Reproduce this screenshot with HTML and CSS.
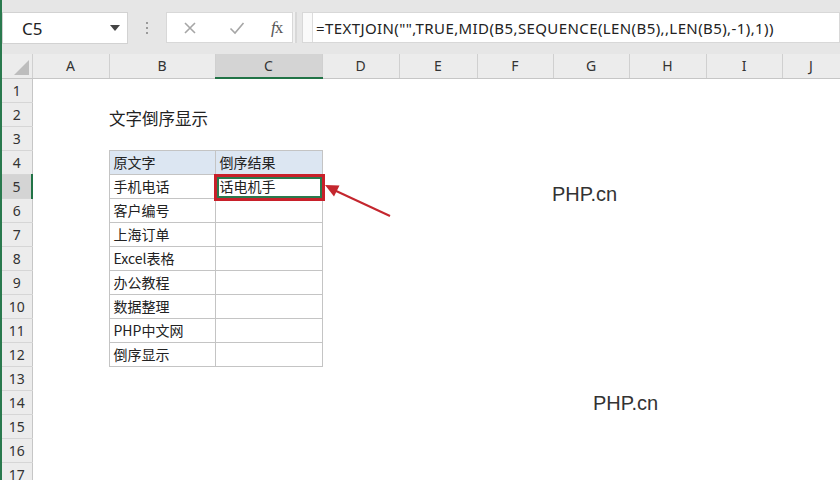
FILE: index.html
```html
<!DOCTYPE html>
<html lang="zh-CN">
<head>
<meta charset="utf-8">
<title>文字倒序显示</title>
<link rel="stylesheet" href="styles.css">
</head>
<body>
<div class="app">
  <div class="toolbar">
    <div class="namebox"><span class="ref">C5</span><span class="caret"></span></div>
    <div class="dots"><i></i><i></i><i></i></div>
    <div class="fbtns">
      <svg class="ico" width="14" height="14" viewBox="0 0 14 14"><path d="M2 2 L12 12 M12 2 L2 12" stroke="#a6a6a6" stroke-width="1.6" fill="none"/></svg>
      <svg class="ico" width="16" height="14" viewBox="0 0 16 14"><path d="M1.5 7.5 L6 12 L14.5 2" stroke="#a6a6a6" stroke-width="1.6" fill="none"/></svg>
      <span class="fx"><i>f</i>x</span>
      <span class="sep"></span>
    </div>
    <div class="fbox"><span class="fgap"></span><span class="ftext">=TEXTJOIN("",TRUE,MID(B5,SEQUENCE(LEN(B5),,LEN(B5),-1),1))</span></div>
  </div>
  <table class="sheet">
    <colgroup>
      <col class="w-rh"><col class="w-a"><col class="w-b"><col class="w-c"><col class="w-d"><col class="w-e"><col class="w-f"><col class="w-g"><col class="w-h"><col class="w-i"><col class="w-j">
    </colgroup>
    <thead>
      <tr><th class="corner"><span class="tri"></span></th><th>A</th><th>B</th><th class="on">C</th><th>D</th><th>E</th><th>F</th><th>G</th><th>H</th><th>I</th><th>J</th></tr>
    </thead>
    <tbody>
      <tr><th>1</th><td></td><td></td><td></td><td></td><td></td><td></td><td></td><td></td><td></td><td></td></tr>
      <tr><th>2</th><td></td><td class="title">文字倒序显示</td><td></td><td></td><td></td><td></td><td></td><td></td><td></td><td></td></tr>
      <tr><th>3</th><td></td><td></td><td></td><td></td><td></td><td></td><td></td><td></td><td></td><td></td></tr>
      <tr><th>4</th><td></td><td class="bx hd">原文字</td><td class="bx hd">倒序结果</td><td></td><td></td><td></td><td></td><td></td><td></td><td></td></tr>
      <tr><th class="on">5</th><td></td><td class="bx">手机电话</td><td class="bx sel">话电机手<span class="selbox"></span></td><td></td><td></td><td></td><td></td><td></td><td></td><td></td></tr>
      <tr><th>6</th><td></td><td class="bx">客户编号</td><td class="bx"></td><td></td><td></td><td></td><td></td><td></td><td></td><td></td></tr>
      <tr><th>7</th><td></td><td class="bx">上海订单</td><td class="bx"></td><td></td><td></td><td></td><td></td><td></td><td></td><td></td></tr>
      <tr><th>8</th><td></td><td class="bx">Excel表格</td><td class="bx"></td><td></td><td></td><td></td><td></td><td></td><td></td><td></td></tr>
      <tr><th>9</th><td></td><td class="bx">办公教程</td><td class="bx"></td><td></td><td></td><td></td><td></td><td></td><td></td><td></td></tr>
      <tr><th>10</th><td></td><td class="bx">数据整理</td><td class="bx"></td><td></td><td></td><td></td><td></td><td></td><td></td><td></td></tr>
      <tr><th>11</th><td></td><td class="bx">PHP中文网</td><td class="bx"></td><td></td><td></td><td></td><td></td><td></td><td></td><td></td></tr>
      <tr><th>12</th><td></td><td class="bx">倒序显示</td><td class="bx"></td><td></td><td></td><td></td><td></td><td></td><td></td><td></td></tr>
      <tr><th>13</th><td></td><td></td><td></td><td></td><td></td><td></td><td></td><td></td><td></td><td></td></tr>
      <tr><th>14</th><td></td><td></td><td></td><td></td><td></td><td></td><td></td><td></td><td></td><td></td></tr>
      <tr><th>15</th><td></td><td></td><td></td><td></td><td></td><td></td><td></td><td></td><td></td><td></td></tr>
      <tr><th>16</th><td></td><td></td><td></td><td></td><td></td><td></td><td></td><td></td><td></td><td></td></tr>
      <tr><th>17</th><td></td><td></td><td></td><td></td><td></td><td></td><td></td><td></td><td></td><td></td></tr>
    </tbody>
  </table>
  <div class="mark m1">PHP.cn</div>
  <div class="mark m2">PHP.cn</div>
  <svg class="arrow" width="840" height="480" viewBox="0 0 840 480">
    <line x1="390" y1="216" x2="334" y2="190" stroke="#c4262e" stroke-width="2"/>
    <polygon points="325,185 339.5,185.5 334,196.5" fill="#c4262e"/>
  </svg>
</div>
</body>
</html>
```

FILE: styles.css
```css
* { box-sizing: border-box; }
html, body { margin: 0; padding: 0; }
body {
  width: 840px;
  height: 480px;
  overflow: hidden;
  background: #ffffff;
  font-family: "Noto Sans", "Noto Sans CJK SC", sans-serif;
  color: #222;
}
.app {
  position: relative;
  width: 840px;
  height: 480px;
  overflow: hidden;
  border-left: 2px solid #2a7a4e;
}

/* toolbar */
.toolbar {
  height: 54px;
  background: #e6e6e6;
  display: flex;
  align-items: flex-start;
  padding-top: 12px;
}
.namebox {
  width: 126px;
  height: 32px;
  background: #fff;
  border: 1px solid #d2d2d2;
  display: flex;
  align-items: center;
  justify-content: space-between;
  padding: 0 7px 0 19px;
}
.ref { font-size: 17px; color: #222; }
.caret {
  width: 0; height: 0;
  border-left: 5px solid transparent;
  border-right: 5px solid transparent;
  border-top: 6px solid #444;
}
.dots {
  width: 38px;
  height: 32px;
  display: flex;
  flex-direction: column;
  align-items: center;
  justify-content: center;
  gap: 3px;
}
.dots i { width: 2px; height: 2px; background: #9a9a9a; display: block; }
.fbtns {
  width: 131px;
  height: 31px;
  background: #fff;
  border: 1px solid #d8d8d8;
  display: flex;
  align-items: center;
  padding-left: 16px;
}
.fbtns .ico { display: block; }
.fbtns .ico + .ico { margin-left: 32px; }
.fx {
  margin-left: 26px;
  font-family: "Liberation Serif", serif;
  font-size: 17px;
  color: #555;
  letter-spacing: -1px;
}
.fx i { font-style: italic; }
.sep {
  margin-left: auto;
  width: 4px;
  height: 31px;
  border-left: 1px solid #d8d8d8;
  border-right: 1px solid #d8d8d8;
  background: #f0f0f0;
}
.fbox {
  margin-left: 5px;
  flex: 1;
  height: 31px;
  background: #fff;
  border: 1px solid #d8d8d8;
  display: flex;
  align-items: center;
}
.fgap {
  width: 10px;
  height: 100%;
  border-right: 1px solid #dcdcdc;
  background: #fafafa;
}
.ftext {
  padding-left: 3px;
  font-size: 15px;
  color: #222;
  white-space: nowrap;
  letter-spacing: 0.4px;
}

/* sheet */
.sheet {
  border-collapse: collapse;
  table-layout: fixed;
  width: 838px;
}
.w-rh { width: 30px; }
.w-a { width: 77px; }
.w-b { width: 106px; }
.w-c { width: 107px; }
.w-d { width: 77px; }
.w-e { width: 78px; }
.w-f { width: 76px; }
.w-g { width: 76px; }
.w-h { width: 77px; }
.w-i { width: 76px; }
.w-j { width: 58px; }

.sheet thead th {
  height: 24px;
  background: #ececec;
  font-weight: normal;
  font-size: 14px;
  color: #333;
  border-right: 1px solid #d0d0d0;
  border-bottom: 1px solid #c6c6c6;
  padding: 0;
  text-align: center;
}
.sheet thead th.on {
  background: #d4d4d4;
  border-bottom: 2px solid #217346;
}
.sheet th.corner { position: relative; }
.tri {
  position: absolute;
  right: 3px;
  bottom: 3px;
  width: 0; height: 0;
  border-left: 15px solid transparent;
  border-bottom: 15px solid #bdbdbd;
}
.sheet tbody th {
  height: 24px;
  background: #ececec;
  font-weight: normal;
  font-size: 14px;
  color: #333;
  border-right: 1px solid #c6c6c6;
  border-bottom: 1px solid #d6d6d6;
  padding: 0;
  text-align: center;
}
.sheet tbody th.on {
  background: #d4d4d4;
  border-right: 2px solid #217346;
}
.sheet td {
  height: 24px;
  padding: 0 0 0 4px;
  font-size: 14px;
  font-family: "Noto Sans CJK SC", "Noto Sans", sans-serif;
  color: #222;
  white-space: nowrap;
  overflow: visible;
}
.sheet td.title {
  font-size: 16.5px;
  padding: 10px 0 0 0;
  vertical-align: top;
  line-height: 13px;
}
.sheet td.bx { border: 1px solid #c4c4c4; }
.sheet td.hd { background: #dce6f2; }
.sheet td.sel { position: relative; }
.selbox {
  position: absolute;
  left: -2px;
  top: -1px;
  width: 111px;
  height: 27px;
  border: 3px solid #c8202a;
  box-shadow: inset 0 0 0 2px #2a7a4e;
}

/* overlays */
.mark {
  position: absolute;
  font-family: "Liberation Sans", Arial, sans-serif;
  font-size: 20px;
  color: #333;
}
.m1 { left: 550px; top: 183px; }
.m2 { left: 591px; top: 392px; }
.arrow {
  position: absolute;
  left: -2px;
  top: 0;
  pointer-events: none;
}
```
